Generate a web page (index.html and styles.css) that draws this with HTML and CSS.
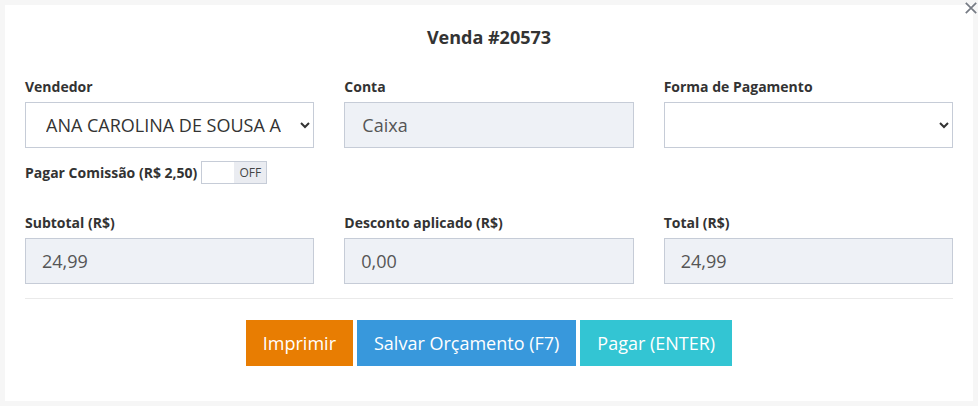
FILE: index.html
```html
<html lang="pt-br">
  <head>
    <meta name="viewport" content="width=device-width, initial-scale=1" />
    <title>Venda #20573</title>
    <link rel="stylesheet" href="styles.css">
  </head>
  <body>
    <div class="modal">
      <button class="close" type="button" aria-label="Fechar">
        <svg width="12" height="12" viewBox="0 0 12 12">
          <path d="M0.8 0.8L11.2 11.2M11.2 0.8L0.8 11.2" stroke="#767b84" stroke-width="1.7" fill="none" />
        </svg>
      </button>
      <h3 class="modal-title">Venda #20573</h3>
      <div class="modal-body">
        <div class="row">
          <div class="field">
            <label>Vendedor</label>
            <select class="form-control sel-vendedor">
              <option>ANA CAROLINA DE SOUSA ALMEIDA</option>
            </select>
          </div>
          <div class="field">
            <label>Conta</label>
            <input class="form-control" type="text" value="Caixa" disabled />
          </div>
          <div class="field">
            <label>Forma de Pagamento</label>
            <select class="form-control">
              <option></option>
            </select>
          </div>
        </div>
        <div class="comissao">
          <label>Pagar Comissão (R$ 2,50)</label>
          <div class="toggle">
            <span class="toggle-on"></span>
            <span class="toggle-off">OFF</span>
          </div>
        </div>
        <div class="row row-totais">
          <div class="field">
            <label>Subtotal (R$)</label>
            <input class="form-control num" type="text" value="24,99" disabled />
          </div>
          <div class="field">
            <label>Desconto aplicado (R$)</label>
            <input class="form-control num" type="text" value="0,00" disabled />
          </div>
          <div class="field">
            <label>Total (R$)</label>
            <input class="form-control num" type="text" value="24,99" disabled />
          </div>
        </div>
        <hr />
        <div class="actions">
          <button class="btn btn-orange" type="button">Imprimir</button>
          <button class="btn btn-blue" type="button">Salvar Orçamento (F7)</button>
          <button class="btn btn-teal" type="button">Pagar (ENTER)</button>
        </div>
      </div>
    </div>
  </body>
</html>
```

FILE: styles.css
```css
body {
  margin: 0;
  background-color: #f6f6f6;
  font-family: "Open Sans", "Liberation Sans", sans-serif;
  color: #333;
}
.modal {
  position: relative;
  margin: 5px 5px 0 5px;
  width: 968px;
  height: 396px;
  background-color: #fff;
  box-sizing: border-box;
  padding: 0 20px;
}
.close {
  position: absolute;
  top: -3px;
  right: -4px;
  padding: 0;
  border: 0;
  background: none;
  line-height: 0;
}
.close svg {
  display: block;
}
.modal-title {
  margin: 0;
  padding-top: 20px;
  height: 42px;
  text-align: center;
  font-size: 18px;
  font-weight: 700;
  line-height: 25px;
  color: #333;
}
.row {
  display: grid;
  grid-template-columns: 1fr 1fr 1fr;
  column-gap: 30px;
}
.row-totais {
  margin-top: 19px;
}
.field label,
.comissao label {
  display: block;
  font-size: 14px;
  font-weight: 700;
  line-height: 19px;
  color: #333;
}
.field label {
  margin-top: 10px;
  margin-bottom: 6px;
}
.form-control {
  display: block;
  width: 100%;
  height: 46px;
  box-sizing: border-box;
  border: 1px solid #c6ccd7;
  border-radius: 0;
  background-color: #fff;
  font-family: "Open Sans", "Liberation Sans", sans-serif;
  font-size: 18px;
  color: #333;
  padding: 0 17px;
  margin: 0;
  outline: none;
}
.form-control:disabled {
  background-color: #eef1f6;
  color: #555;
}
.sel-vendedor {
  padding-left: 16px;
  padding-right: 16px;
}
.num {
  padding-left: 16px;
}
.comissao {
  display: flex;
  align-items: center;
  margin-top: 13px;
  height: 23px;
}
.comissao label {
  margin-right: 4px;
}
.toggle {
  display: flex;
  width: 66px;
  height: 23px;
  box-sizing: border-box;
  border: 1px solid #c6ccd7;
}
.toggle-on {
  width: 32px;
  background-color: #fff;
}
.toggle-off {
  flex: 1;
  background-color: #eaecf1;
  font-size: 12px;
  line-height: 21px;
  text-align: center;
  color: #444;
}
hr {
  margin: 14px 0 0 0;
  border: 0;
  border-top: 1px solid #eaeaea;
}
.actions {
  display: flex;
  justify-content: center;
  gap: 4px;
  margin-top: 21px;
}
.btn {
  height: 46px;
  border: 0;
  border-radius: 0;
  padding: 0 17px;
  font-family: "Open Sans", "Liberation Sans", sans-serif;
  font-size: 18px;
  color: #fff;
}
.btn-orange {
  background-color: #e87d02;
}
.btn-blue {
  background-color: #3898dc;
}
.btn-teal {
  background-color: #33c5d3;
}
```
